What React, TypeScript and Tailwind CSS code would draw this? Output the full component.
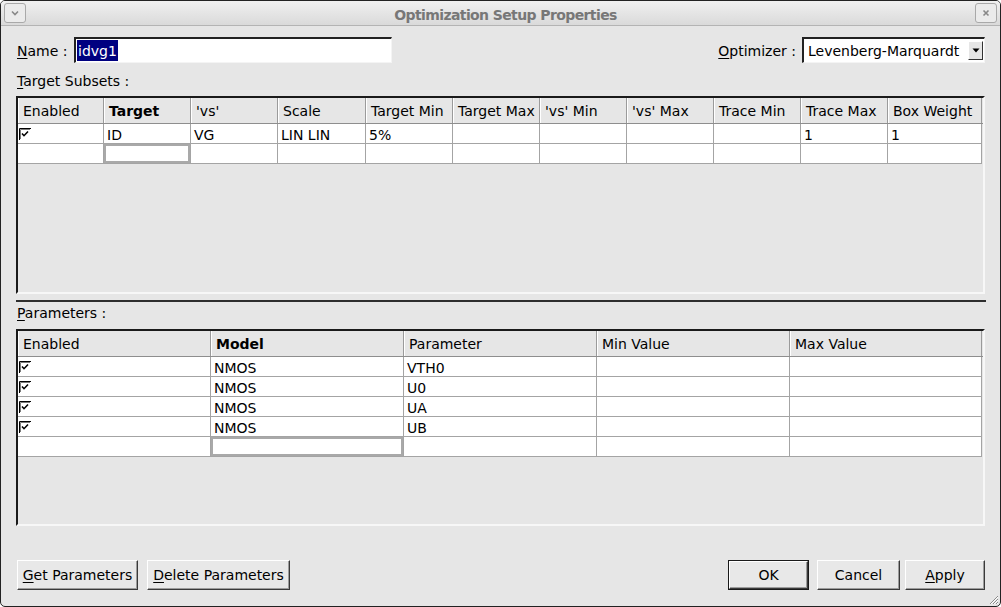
import React from "react";

const FONT = { fontFamily: '"DejaVu Sans", "Liberation Sans", sans-serif' };

function Check() {
  return (
    <svg width="12" height="12" viewBox="0 0 12 12" className="block">
      <rect x="0" y="0" width="12" height="12" fill="#ffffff" />
      <path d="M0.5 12V0.5H12" stroke="#000" strokeWidth="1" fill="none" />
      <path d="M1.5 11V1.5H11" stroke="#7a7a7a" strokeWidth="1" fill="none" />
      <path d="M3 5.5l2 2.2L9 3.5" stroke="#000" strokeWidth="1.6" fill="none" />
    </svg>
  );
}

function U({ c, rest }: { c: string; rest: string }) {
  return (
    <span className="whitespace-nowrap">
      <span className="underline underline-offset-[2px]">{c}</span>
      {rest}
    </span>
  );
}

type Cell = string | { check: true } | { edit: true };

function Grid({
  cols,
  heads,
  bold,
  rows,
  height,
}: {
  cols: number[];
  heads: string[];
  bold: number;
  rows: Cell[][];
  height: number;
}) {
  return (
    <div
      className="bg-[#e6e6e6] border-t-2 border-l-2 border-t-[#1a1a1a] border-l-[#1a1a1a] border-r-2 border-b-2 border-r-[#f7f7f7] border-b-[#f7f7f7] overflow-hidden"
      style={{ height }}
    >
      <div className="flex h-[26px] border-b border-[#8e8e8e]">
        {heads.map((h, i) => (
          <div
            key={h}
            className={
              "flex items-center pl-[4px] pt-[2px] border-l border-l-white border-r border-r-[#9a9a9a] " +
              (i === bold ? "font-bold" : "")
            }
            style={{ width: cols[i] }}
          >
            {h}
          </div>
        ))}
      </div>
      {rows.map((r, ri) => (
        <div key={ri} className="flex h-[20px]">
          {r.map((c, ci) => (
            <div
              key={ci}
              className="bg-white border-r border-b border-[#a4a4a4] flex items-center"
              style={{ width: cols[ci] }}
            >
              {typeof c === "string" ? (
                <span className="pl-[3px] pt-[3px] leading-[19px]">{c}</span>
              ) : "check" in c ? (
                <span className="pl-[1px]">
                  <Check />
                </span>
              ) : (
                <div className="w-full h-full border-2 border-[#a9a9a9] bg-white" />
              )}
            </div>
          ))}
        </div>
      ))}
    </div>
  );
}

function Btn({
  children,
  w,
  def,
}: {
  children: React.ReactNode;
  w: number;
  def?: boolean;
}) {
  return (
    <div
      className={
        "h-[30px] " + (def ? "border border-[#1a1a1a]" : "")
      }
      style={{ width: w }}
    >
      <div className="h-full w-full flex items-center justify-center pt-[1px] bg-[#e8e8e8] border-t border-l border-t-white border-l-white border-r border-b border-r-[#3a3a3a] border-b-[#3a3a3a] shadow-[inset_-1px_-1px_0_#9c9c9c]">
        {children}
      </div>
    </div>
  );
}

export default function App() {
  const ck = { check: true } as const;
  const ed = { edit: true } as const;
  const e = "";
  const targetCols = [86, 87, 87, 88, 87, 87, 87, 87, 87, 87, 94];
  const paramCols = [193, 193, 193, 193, 192];

  return (
    <div
      className="w-[1001px] h-[607px] bg-[#e6e6e6] border border-[#222] rounded-[5px] overflow-hidden flex flex-col text-[14px] text-black"
      style={FONT}
    >
      {/* title bar */}
      <div className="h-[25px] flex items-start justify-between px-[3px] pt-[2px] bg-gradient-to-b from-[#f0f0f0] to-[#dadada] border-b border-[#b4b4b4]">
        <div className="w-[22px] h-[20px] rounded-[3px] border border-[#a9a9a9] bg-[#ebebeb] flex items-center justify-center">
          <svg width="10" height="8" viewBox="0 0 10 8">
            <path d="M2 2.5l3 3 3-3" stroke="#888" strokeWidth="1.6" fill="none" />
          </svg>
        </div>
        <div className="font-bold text-[#777] text-[14px] leading-[24px] tracking-[-0.6px] ml-[10px]">
          Optimization Setup Properties
        </div>
        <div className="w-[22px] h-[20px] rounded-[3px] border border-[#a9a9a9] bg-[#ebebeb] flex items-center justify-center">
          <svg width="10" height="10" viewBox="0 0 10 10">
            <path d="M2.5 2.5l5 5M7.5 2.5l-5 5" stroke="#888" strokeWidth="1.6" />
          </svg>
        </div>
      </div>

      <div className="flex-1 flex flex-col px-[15px]">
        {/* name / optimizer row */}
        <div className="mt-[11px] h-[26px] flex items-center justify-between">
          <div className="flex items-center">
            <div className="w-[58px] pl-[1px] pt-[2px]">
              <U c="N" rest="ame :" />
            </div>
            <div className="w-[318px] h-[26px] bg-white border-t-2 border-l-2 border-t-[#222] border-l-[#222] border-r border-b border-r-[#f4f4f4] border-b-[#f4f4f4] flex items-center pl-[1px]">
              <span className="bg-[#000080] text-white px-[1px] leading-[20px] pt-[1px]">idvg1</span>
            </div>
          </div>
          <div className="flex items-center">
            <span className="pt-[2px]">
              <U c="O" rest="ptimizer :" />
            </span>
            <div className="ml-[6px] w-[183px] h-[26px] bg-white border-t-2 border-l-2 border-t-[#222] border-l-[#222] border-r border-b border-r-[#f4f4f4] border-b-[#f4f4f4] flex items-center justify-between pl-[4px] pr-[1px]">
              <span className="whitespace-nowrap pt-[2px]">Levenberg-Marquardt</span>
              <div className="w-[15px] h-[19px] bg-[#e6e6e6] border-t border-l border-t-white border-l-white border-r border-b border-r-[#333] border-b-[#333] flex items-center justify-center">
                <svg width="8" height="5" viewBox="0 0 8 5">
                  <path d="M0.5 0.5h7L4 4.5z" fill="#000" />
                </svg>
              </div>
            </div>
          </div>
        </div>

        <div className="mt-[8px] h-[18px] leading-[18px] pl-[1px] pt-[1px]">
          <U c="T" rest="arget Subsets :" />
        </div>
        <div className="mt-[7px]">
          <Grid
            cols={targetCols}
            heads={[
              "Enabled",
              "Target",
              "'vs'",
              "Scale",
              "Target Min",
              "Target Max",
              "'vs' Min",
              "'vs' Max",
              "Trace Min",
              "Trace Max",
              "Box Weight",
            ]}
            bold={1}
            rows={[
              [ck, "ID", "VG", "LIN LIN", "5%", e, e, e, e, "1", "1"],
              [e, ed, e, e, e, e, e, e, e, e, e],
            ]}
            height={198}
          />
        </div>

        {/* splitter */}
        <div className="h-[9px] pt-[6px]">
          <div className="h-[2px] bg-[#2e2e2e] -mr-[1px]" />
        </div>

        <div className="h-[18px] leading-[18px] pl-[1px] pt-[1px]">
          <U c="P" rest="arameters :" />
        </div>
        <div className="mt-[8px]">
          <Grid
            cols={paramCols}
            heads={["Enabled", "Model", "Parameter", "Min Value", "Max Value"]}
            bold={1}
            rows={[
              [ck, "NMOS", "VTH0", e, e],
              [ck, "NMOS", "U0", e, e],
              [ck, "NMOS", "UA", e, e],
              [ck, "NMOS", "UB", e, e],
              [e, ed, e, e, e],
            ]}
            height={197}
          />
        </div>

        {/* buttons */}
        <div className="mt-[34px] flex items-center justify-between">
          <div className="flex items-center gap-[9px] pl-[1px]">
            <Btn w={121}>
              <U c="G" rest="et Parameters" />
            </Btn>
            <Btn w={143}>
              <U c="D" rest="elete Parameters" />
            </Btn>
          </div>
          <div className="flex items-center">
            <Btn w={81} def>
              OK
            </Btn>
            <div className="w-[8px]" />
            <Btn w={83}>Cancel</Btn>
            <div className="w-[5px]" />
            <Btn w={80}>
              <U c="A" rest="pply" />
            </Btn>
          </div>
        </div>

        <div className="flex-1 flex justify-end items-end -mr-[14px]">
          <svg width="12" height="12" viewBox="0 0 12 12" className="mb-[1px]">
            <path d="M11 3L3 11M11 6L6 11M11 9L9 11" stroke="#8a8a8a" strokeWidth="1" />
            <path d="M11 4L4 11M11 7L7 11M11 10L10 11" stroke="#fff" strokeWidth="1" />
          </svg>
        </div>
      </div>
    </div>
  );
}
